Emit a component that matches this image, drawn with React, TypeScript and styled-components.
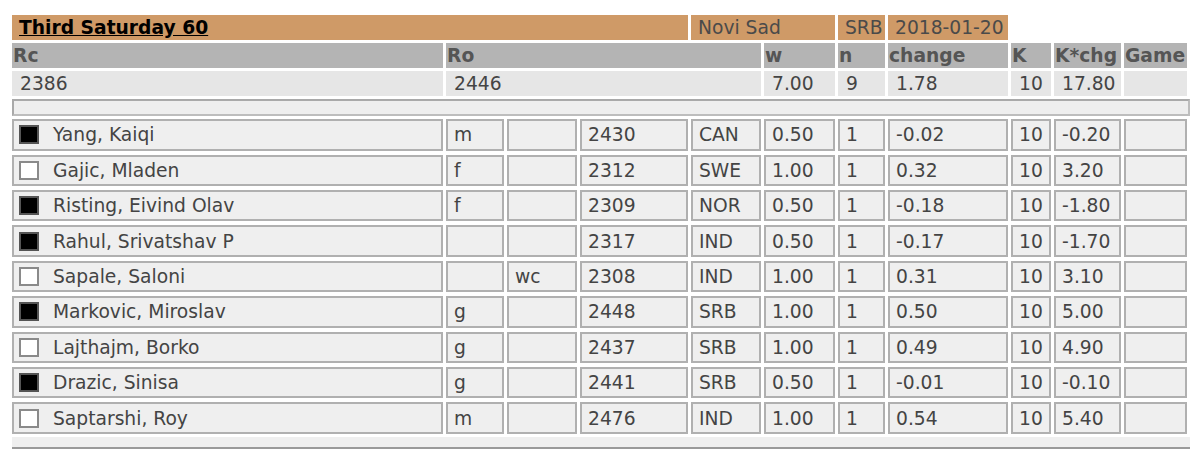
import React from "react";
import styled, { createGlobalStyle } from "styled-components";

const GlobalStyle = createGlobalStyle`
  body {
    margin: 0;
    background: #fff;
    font-family: "DejaVu Sans", Verdana, sans-serif;
  }
`;

const COLS = "431px 58px 70px 108px 70px 71px 47px 120px 40px 67px 63px";

const Page = styled.div`
  padding: 15px 0 0 12px;
  font-size: 18.7px;
  color: #3c3c3c;
  display: flex;
  flex-direction: column;
  gap: 3px;
`;

const Row = styled.div<{ $h: number }>`
  display: grid;
  grid-template-columns: ${COLS};
  column-gap: 3px;
  height: ${(p) => p.$h}px;
  width: 1175px;
`;

const Cell = styled.div<{ $span?: number }>`
  grid-column: span ${(p) => p.$span ?? 1};
  display: flex;
  align-items: center;
  white-space: nowrap;
  overflow: hidden;
  box-sizing: border-box;
`;

const TitleCell = styled(Cell)`
  background: #cf9a67;
  color: #4a4a4a;
  padding-left: 7px;
`;

const EventName = styled.span`
  font-weight: bold;
  color: #000;
  text-decoration: underline;
`;

const HeadCell = styled(Cell)`
  background: #b4b4b4;
  color: #555;
  font-weight: bold;
  padding-left: 1px;
`;

const SumCell = styled(Cell)`
  background: #e6e6e6;
  color: #444;
  padding-left: 8px;
`;

const Divider = styled.div`
  width: 1178px;
  height: 17px;
  box-sizing: border-box;
  background: #eeeeee;
  border: 2px solid #a9a9a9;
  border-bottom-color: #bdbdbd;
  border-right-color: #bdbdbd;
`;

const Players = styled.div`
  display: flex;
  flex-direction: column;
  gap: 4px;
  margin-top: 0.3px;
`;

const PlayerCell = styled(Cell)`
  background: #efefef;
  border: 2px solid #b0b0b0;
  padding-left: 6px;
  color: #444;
`;

const NameCell = styled(PlayerCell)`
  padding-left: 5px;
  gap: 14px;
`;

const ColourBox = styled.span<{ $black: boolean }>`
  width: 20px;
  height: 19px;
  box-sizing: border-box;
  border: 2px solid ${(p) => (p.$black ? "#555" : "#8a8a8a")};
  background: ${(p) => (p.$black ? "#000" : "#fff")};
  flex: none;
`;

const BottomStrip = styled.div`
  width: 1178px;
  height: 10px;
  background: #efefef;
  border-bottom: 2px solid #9a9a9a;
`;

type Player = {
  black: boolean;
  name: string;
  title: string;
  flag: string;
  rating: number;
  fed: string;
  score: string;
  change: string;
  kchg: string;
};

const players: Player[] = [
  { black: true, name: "Yang, Kaiqi", title: "m", flag: "", rating: 2430, fed: "CAN", score: "0.50", change: "-0.02", kchg: "-0.20" },
  { black: false, name: "Gajic, Mladen", title: "f", flag: "", rating: 2312, fed: "SWE", score: "1.00", change: "0.32", kchg: "3.20" },
  { black: true, name: "Risting, Eivind Olav", title: "f", flag: "", rating: 2309, fed: "NOR", score: "0.50", change: "-0.18", kchg: "-1.80" },
  { black: true, name: "Rahul, Srivatshav P", title: "", flag: "", rating: 2317, fed: "IND", score: "0.50", change: "-0.17", kchg: "-1.70" },
  { black: false, name: "Sapale, Saloni", title: "", flag: "wc", rating: 2308, fed: "IND", score: "1.00", change: "0.31", kchg: "3.10" },
  { black: true, name: "Markovic, Miroslav", title: "g", flag: "", rating: 2448, fed: "SRB", score: "1.00", change: "0.50", kchg: "5.00" },
  { black: false, name: "Lajthajm, Borko", title: "g", flag: "", rating: 2437, fed: "SRB", score: "1.00", change: "0.49", kchg: "4.90" },
  { black: true, name: "Drazic, Sinisa", title: "g", flag: "", rating: 2441, fed: "SRB", score: "0.50", change: "-0.01", kchg: "-0.10" },
  { black: false, name: "Saptarshi, Roy", title: "m", flag: "", rating: 2476, fed: "IND", score: "1.00", change: "0.54", kchg: "5.40" },
];

export default function App() {
  return (
    <>
      <GlobalStyle />
      <Page>
        <Row $h={25}>
          <TitleCell $span={4}>
            <EventName>Third Saturday 60</EventName>
          </TitleCell>
          <TitleCell $span={2}>Novi Sad</TitleCell>
          <TitleCell>SRB</TitleCell>
          <TitleCell>2018-01-20</TitleCell>
        </Row>
        <Row $h={25}>
          <HeadCell>Rc</HeadCell>
          <HeadCell $span={4}>Ro</HeadCell>
          <HeadCell>w</HeadCell>
          <HeadCell>n</HeadCell>
          <HeadCell>change</HeadCell>
          <HeadCell>K</HeadCell>
          <HeadCell>K*chg</HeadCell>
          <HeadCell>Game</HeadCell>
        </Row>
        <Row $h={25}>
          <SumCell>2386</SumCell>
          <SumCell $span={4}>2446</SumCell>
          <SumCell>7.00</SumCell>
          <SumCell>9</SumCell>
          <SumCell>1.78</SumCell>
          <SumCell>10</SumCell>
          <SumCell>17.80</SumCell>
          <SumCell />
        </Row>
        <Divider />
        <Players>
          {players.map((p) => (
            <Row $h={31.4} key={p.name}>
              <NameCell>
                <ColourBox $black={p.black} />
                {p.name}
              </NameCell>
              <PlayerCell>{p.title}</PlayerCell>
              <PlayerCell>{p.flag}</PlayerCell>
              <PlayerCell>{p.rating}</PlayerCell>
              <PlayerCell>{p.fed}</PlayerCell>
              <PlayerCell>{p.score}</PlayerCell>
              <PlayerCell>1</PlayerCell>
              <PlayerCell>{p.change}</PlayerCell>
              <PlayerCell>10</PlayerCell>
              <PlayerCell>{p.kchg}</PlayerCell>
              <PlayerCell />
            </Row>
          ))}
        </Players>
        <BottomStrip />
      </Page>
    </>
  );
}
